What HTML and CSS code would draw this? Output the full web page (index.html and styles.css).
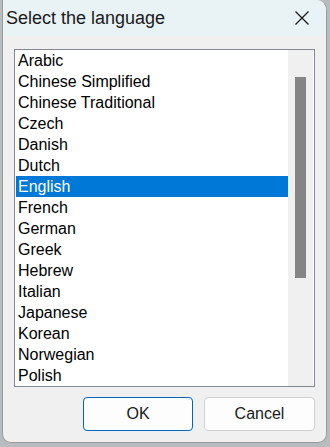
FILE: index.html
```html
<!DOCTYPE html>
<html lang="en">
<head>
  <meta charset="UTF-8">
  <title>Select the language</title>
  <link rel="stylesheet" href="styles.css">
</head>
<body>
  <div class="dialog">
    <div class="titlebar">
      <span class="title">Select the language</span>
      <svg class="close" width="16" height="16" viewBox="0 0 16 16"><path d="M1.5 1.5L14.5 14.5M14.5 1.5L1.5 14.5" stroke="#1a1a1a" stroke-width="1.3" fill="none"/></svg>
    </div>
    <div class="content">
      <div class="listbox">
        <ul class="items">
          <li>Arabic</li>
          <li>Chinese Simplified</li>
          <li>Chinese Traditional</li>
          <li>Czech</li>
          <li>Danish</li>
          <li>Dutch</li>
          <li class="selected">English</li>
          <li>French</li>
          <li>German</li>
          <li>Greek</li>
          <li>Hebrew</li>
          <li>Italian</li>
          <li>Japanese</li>
          <li>Korean</li>
          <li>Norwegian</li>
          <li>Polish</li>
        </ul>
        <div class="scrollbar"><div class="thumb"></div></div>
      </div>
      <div class="buttons">
        <button class="btn primary">OK</button>
        <button class="btn">Cancel</button>
      </div>
    </div>
  </div>
</body>
</html>
```

FILE: styles.css
```css
body { margin: 0; background: #b9bcbe; font-family: "Liberation Sans", Arial, sans-serif; color: #000; }
.dialog { margin-left: 2px; width: 325px; height: 443px; background: #f0f0f0; border: 1px solid #9a9a9a; border-top: none; border-radius: 0 10px 9px 9px; overflow: hidden; box-sizing: border-box; display: flex; flex-direction: column; }
.titlebar { height: 36px; background: #e9f3f6; display: flex; align-items: center; justify-content: space-between; padding: 1px 16px 0 3px; box-sizing: border-box; }
.title { font-size: 18px; color: #1a1a1a; }
.close { display: block; margin-top: -1px; }
.content { flex: 1; padding: 13px 11px 0 11px; }
.listbox { height: 338px; background: #fff; border: 1px solid #828790; display: flex; box-sizing: border-box; padding: 0 1px 0 1px; }
.items { list-style: none; margin: 0; padding: 0; flex: 1; overflow: hidden; }
.items li { height: 21px; line-height: 20px; padding: 1px 0 0 2px; box-sizing: border-box; font-size: 16px; white-space: nowrap; }
.items li.selected { background: #0078d7; color: #fff; }
.scrollbar { width: 25px; background: #f0f0f0; padding: 27px 7px 0 7px; box-sizing: border-box; }
.thumb { height: 201px; background: #858585; }
.buttons { display: flex; justify-content: flex-end; gap: 11px; margin-top: 10px; }
.btn { width: 111px; height: 34px; font-family: inherit; font-size: 16px; background: #fdfdfd; border: 1px solid #d0d0d0; border-radius: 4px; color: #1a1a1a; }
.btn.primary { width: 110px; border-color: #0067c0; }
```
